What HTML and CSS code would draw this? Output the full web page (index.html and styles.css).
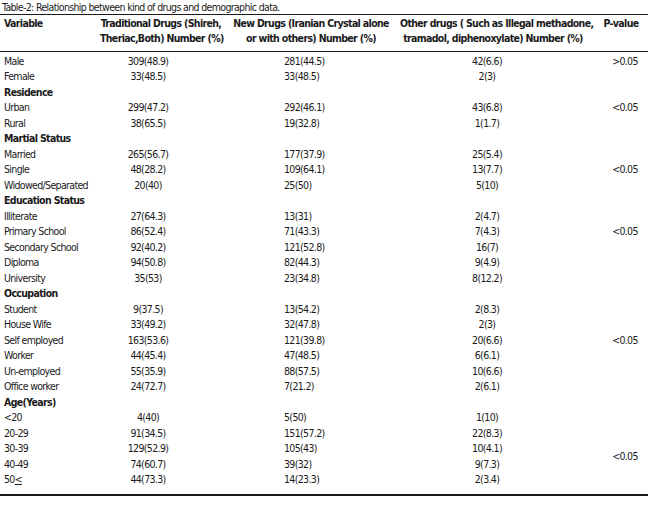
FILE: index.html
```html
<!DOCTYPE html>
<html>
<head>
<meta charset="utf-8">
<link rel="stylesheet" href="styles.css">
</head>
<body>
<div class="page">
  <div class="caption">Table-2: Relationship between kind of drugs and demographic data.</div>
  <table class="data">
    <colgroup>
      <col class="c-var"><col class="c-trad"><col class="c-new"><col class="c-other"><col class="c-p">
    </colgroup>
    <thead>
      <tr>
        <th class="h-var">Variable</th>
        <th class="h-mid">Traditional Drugs (Shireh,<br>Theriac,Both) Number (%)</th>
        <th class="h-mid">New Drugs (Iranian Crystal alone<br>or with others) Number (%)</th>
        <th class="h-mid">Other drugs ( Such as Illegal methadone,<br>tramadol, diphenoxylate) Number (%)</th>
        <th class="h-p">P-value</th>
      </tr>
    </thead>
    <tbody>
      <tr class="first"><td class="v">Male</td><td class="t">309(48.9)</td><td class="n">281(44.5)</td><td class="o">42(6.6)</td><td class="p">&gt;0.05</td></tr>
      <tr><td class="v">Female</td><td class="t">33(48.5)</td><td class="n">33(48.5)</td><td class="o">2(3)</td><td class="p"></td></tr>
      <tr><td class="g" colspan="5">Residence</td></tr>
      <tr><td class="v">Urban</td><td class="t">299(47.2)</td><td class="n">292(46.1)</td><td class="o">43(6.8)</td><td class="p">&lt;0.05</td></tr>
      <tr><td class="v">Rural</td><td class="t">38(65.5)</td><td class="n">19(32.8)</td><td class="o">1(1.7)</td><td class="p"></td></tr>
      <tr><td class="g" colspan="5">Martial Status</td></tr>
      <tr><td class="v">Married</td><td class="t">265(56.7)</td><td class="n">177(37.9)</td><td class="o">25(5.4)</td><td class="p"></td></tr>
      <tr><td class="v">Single</td><td class="t">48(28.2)</td><td class="n">109(64.1)</td><td class="o">13(7.7)</td><td class="p">&lt;0.05</td></tr>
      <tr><td class="v">Widowed/Separated</td><td class="t">20(40)</td><td class="n">25(50)</td><td class="o">5(10)</td><td class="p"></td></tr>
      <tr><td class="g" colspan="5">Education Status</td></tr>
      <tr><td class="v">Illiterate</td><td class="t">27(64.3)</td><td class="n">13(31)</td><td class="o">2(4.7)</td><td class="p"></td></tr>
      <tr><td class="v">Primary School</td><td class="t">86(52.4)</td><td class="n">71(43.3)</td><td class="o">7(4.3)</td><td class="p">&lt;0.05</td></tr>
      <tr><td class="v">Secondary School</td><td class="t">92(40.2)</td><td class="n">121(52.8)</td><td class="o">16(7)</td><td class="p"></td></tr>
      <tr><td class="v">Diploma</td><td class="t">94(50.8)</td><td class="n">82(44.3)</td><td class="o">9(4.9)</td><td class="p"></td></tr>
      <tr><td class="v">University</td><td class="t">35(53)</td><td class="n">23(34.8)</td><td class="o">8(12.2)</td><td class="p"></td></tr>
      <tr><td class="g" colspan="5">Occupation</td></tr>
      <tr><td class="v">Student</td><td class="t">9(37.5)</td><td class="n">13(54.2)</td><td class="o">2(8.3)</td><td class="p"></td></tr>
      <tr><td class="v">House Wife</td><td class="t">33(49.2)</td><td class="n">32(47.8)</td><td class="o">2(3)</td><td class="p"></td></tr>
      <tr><td class="v">Self employed</td><td class="t">163(53.6)</td><td class="n">121(39.8)</td><td class="o">20(6.6)</td><td class="p">&lt;0.05</td></tr>
      <tr><td class="v">Worker</td><td class="t">44(45.4)</td><td class="n">47(48.5)</td><td class="o">6(6.1)</td><td class="p"></td></tr>
      <tr><td class="v">Un-employed</td><td class="t">55(35.9)</td><td class="n">88(57.5)</td><td class="o">10(6.6)</td><td class="p"></td></tr>
      <tr><td class="v">Office worker</td><td class="t">24(72.7)</td><td class="n">7(21.2)</td><td class="o">2(6.1)</td><td class="p"></td></tr>
      <tr><td class="g" colspan="5">Age(Years)</td></tr>
      <tr><td class="v">&lt;20</td><td class="t">4(40)</td><td class="n">5(50)</td><td class="o">1(10)</td><td class="p"></td></tr>
      <tr><td class="v">20-29</td><td class="t">91(34.5)</td><td class="n">151(57.2)</td><td class="o">22(8.3)</td><td class="p"></td></tr>
      <tr><td class="v">30-39</td><td class="t">129(52.9)</td><td class="n">105(43)</td><td class="o">10(4.1)</td><td class="p" rowspan="2">&lt;0.05</td></tr>
      <tr><td class="v">40-49</td><td class="t">74(60.7)</td><td class="n">39(32)</td><td class="o">9(7.3)</td></tr>
      <tr class="last"><td class="v">50<u>&lt;</u></td><td class="t">44(73.3)</td><td class="n">14(23.3)</td><td class="o">2(3.4)</td><td class="p"></td></tr>
    </tbody>
  </table>
</div>
</body>
</html>
```

FILE: styles.css
```css
body {
  margin: 0;
  background: #ffffff;
  color: #1a1a1a;
  font-family: "DejaVu Sans Condensed", "DejaVu Sans", sans-serif;
  font-size: 10.5px;
  letter-spacing: -0.65px;
}

.page {
  width: 648px;
}

.caption {
  height: 14px;
  line-height: 14px;
  padding-left: 2px;
  white-space: nowrap;
}

.data {
  width: 648px;
  border-collapse: collapse;
  table-layout: fixed;
}

.c-var { width: 100px; }
.c-trad { width: 122px; }
.c-new { width: 178px; }
.c-other { width: 186px; }
.c-p { width: 62px; }

.data th {
  font-weight: bold;
  line-height: 15px;
  padding: 1px 0 5px 0;
  border-top: 1.5px solid #1a1a1a;
  border-bottom: 1.5px solid #1a1a1a;
  vertical-align: top;
  white-space: nowrap;
}

.h-var {
  text-align: left;
  padding-left: 4px !important;
}

.h-mid {
  text-align: center;
}

.h-p {
  text-align: center;
  padding-left: 8px !important;
}

.data td {
  line-height: 15.5px;
  padding: 0;
  white-space: nowrap;
  vertical-align: middle;
}

.data td.v {
  padding-left: 4px;
  text-align: left;
}

.data td.g {
  padding-left: 4px;
  font-weight: bold;
  text-align: left;
}

.data td.t {
  text-align: center;
  padding-right: 26px;
}

.data td.n {
  text-align: left;
  padding-left: 62px;
}

.data td.o {
  text-align: center;
  padding-right: 12px;
}

.data td.p {
  text-align: center;
  padding-left: 16px;
}

.data tr.first td {
  padding-top: 1.5px;
}

.data tr.last td {
  padding-bottom: 6.5px;
  border-bottom: 2px solid #1a1a1a;
}
```
